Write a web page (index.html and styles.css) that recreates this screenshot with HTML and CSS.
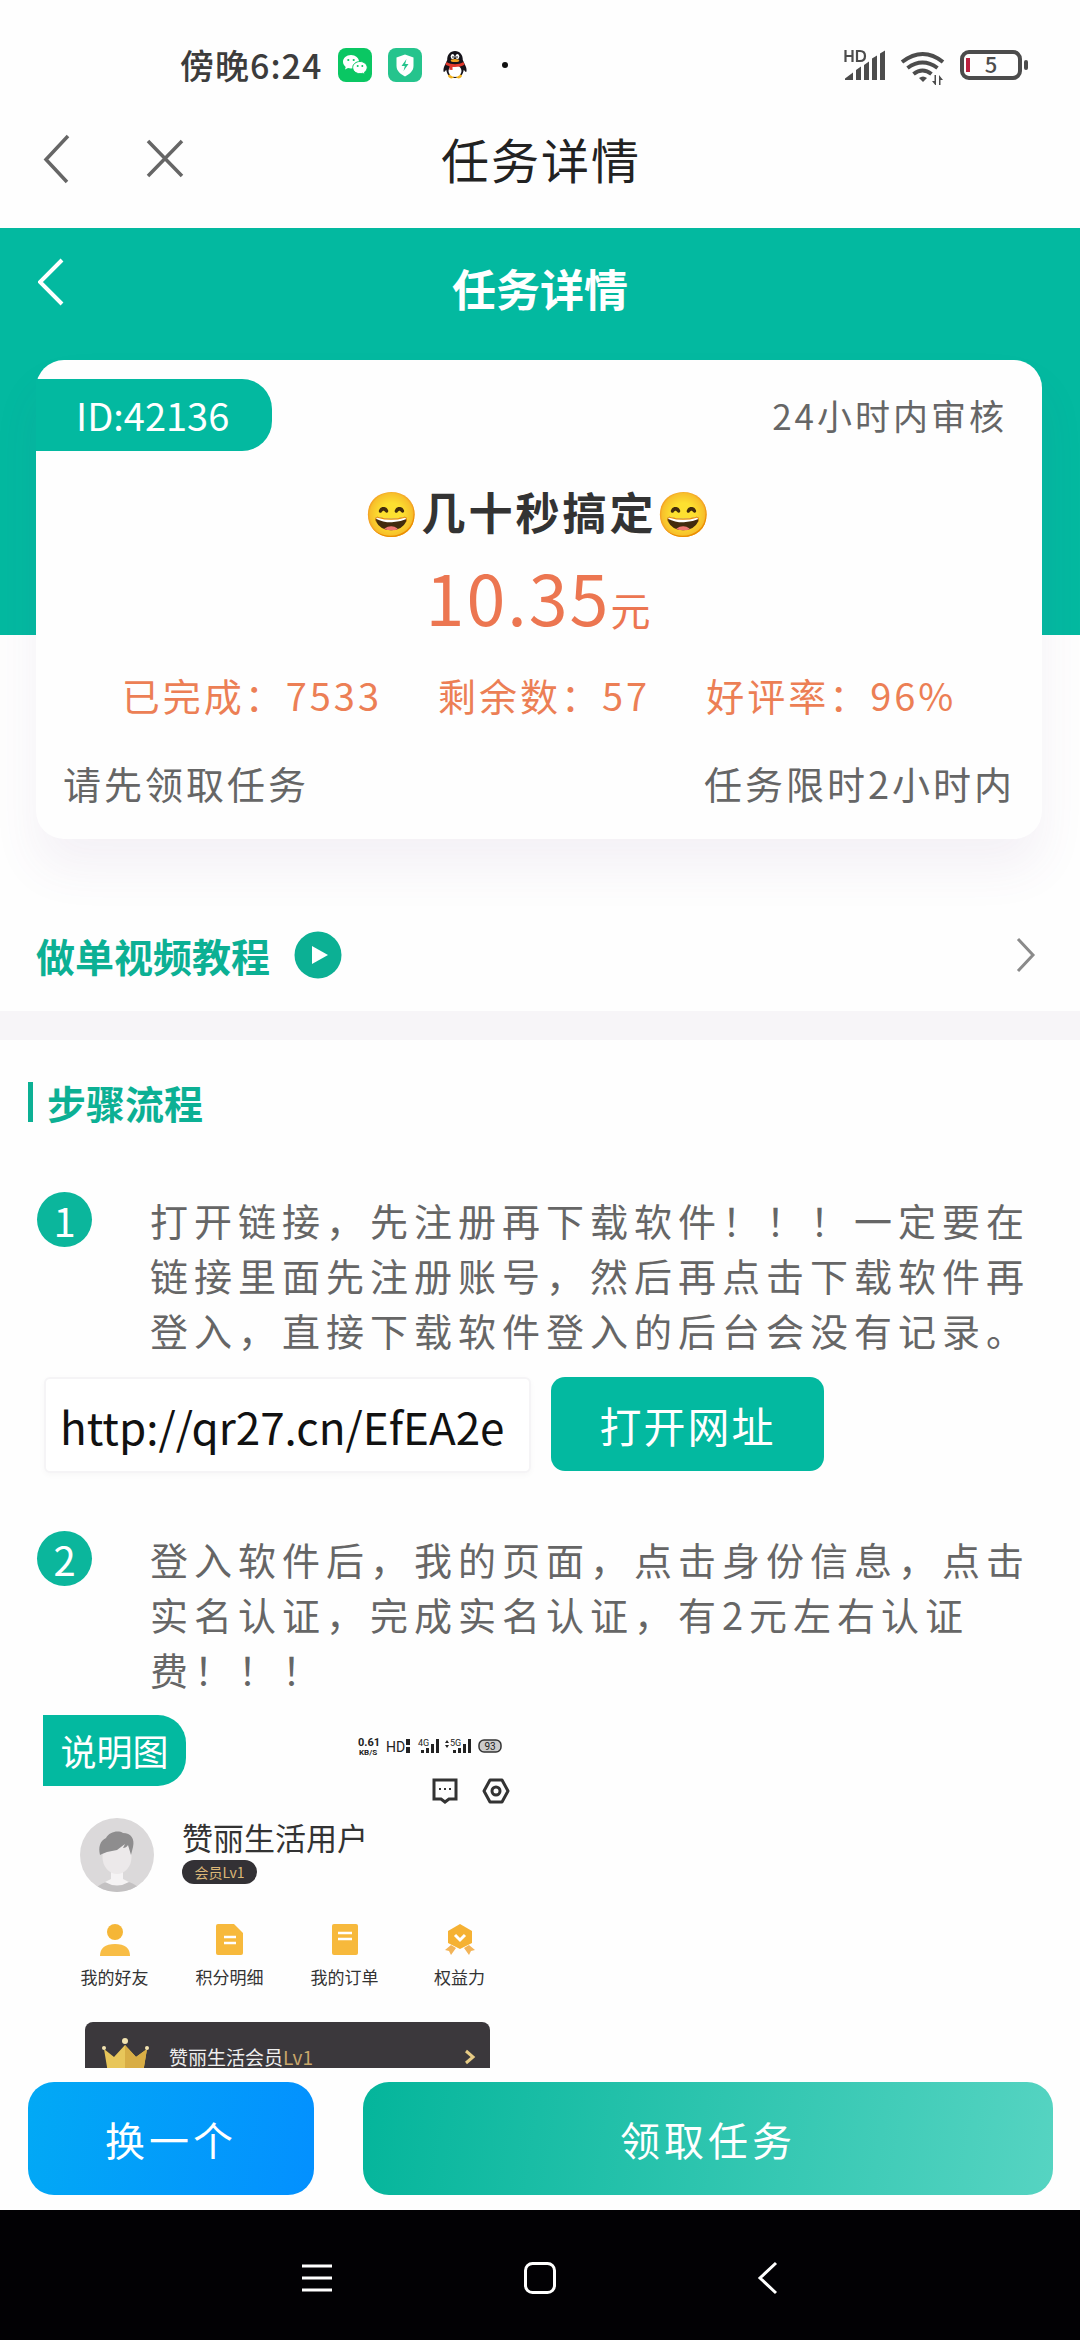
FILE: index.html
```html
<!DOCTYPE html>
<html lang="zh-CN">
<head>
<meta charset="utf-8">
<meta name="viewport" content="width=device-width, initial-scale=1">
<title>任务详情</title>
<link rel="stylesheet" href="styles.css">
</head>
<body>
<div class="status">
  <div class="status-left">
    <span class="clock">傍晚6:24</span>
    <svg class="app-icon" width="34" height="34" viewBox="0 0 34 34" aria-hidden="true">
      <rect width="34" height="34" rx="8" fill="#0ac763"/>
      <path d="M13 7c-4.600 0-8 3-8 6.800 0 2 1 3.900 2.700 5.100L7 21.500l3-1.500c1 .3 2 .4 3 .4 4.500 0 8-3 8-6.700S17.500 7 13 7z" fill="#fff"/>
      <path d="M22 13.500c-4 0-7.300 2.700-7.300 6.100s3.300 6.100 7.300 6.100c.9 0 1.800-.1 2.600-.4l2.400 1.300-.6-2.300c1.700-1.100 2.800-2.800 2.800-4.700 0-3.400-3.200-6.100-7.200-6.100z" fill="#fff" stroke="#0ac763"/>
      <g fill="#0ac763"><circle cx="10.300" cy="12" r="1.100"/><circle cx="15.700" cy="12" r="1.100"/><circle cx="19.700" cy="18" r="1"/><circle cx="24.300" cy="18" r="1"/></g>
    </svg>
    <svg class="app-icon" width="34" height="34" viewBox="0 0 34 34" aria-hidden="true">
      <rect width="34" height="34" rx="8" fill="#25c48d"/>
      <path d="M17 6.500l8.500 3v8.500c0 5-4 8-8.500 10.500C12.500 26 8.500 23 8.500 18V9.500z" fill="#fff"/>
      <path d="M18.500 11l-5 7h3.300L15.500 23l5-7h-3.300z" fill="#25c48d"/>
    </svg>
    <svg class="app-icon" width="34" height="34" viewBox="0 0 34 34" aria-hidden="true">
      <path d="M17 3c-5 0-8 4-7.800 9L6 19c-1 3-.5 5 0 5s1.500-1 2.200-2.200C9 27 12 30 17 30s8-3 8.800-8.200C26.500 23 27.500 24 28 24s1-2 0-5l-3.200-7C25 7 22 3 17 3z" fill="#16131a"/>
      <path d="M10 28c1-2 4-2 6 1-1 2-5 2-6-1zM24 28c-1-2-4-2-6 1 1 2 5 2 6-1z" fill="#f2b21c"/>
      <ellipse cx="17" cy="23" rx="6.500" ry="6" fill="#fff"/>
      <ellipse cx="14.600" cy="8.500" rx="1.900" ry="2.500" fill="#fff"/><ellipse cx="19.400" cy="8.500" rx="1.900" ry="2.500" fill="#fff"/>
      <circle cx="15" cy="9" r=".8"/><circle cx="19" cy="9" r=".8"/>
      <ellipse cx="17" cy="12.500" rx="4.300" ry="1.600" fill="#f0a020"/>
      <path d="M8.500 14c5 3 12 3 17 0l1 2.800c-3 1.800-8 2.600-12 2.100V22l-3.200-.3.200-3.400c-1.600-.3-3-.9-4-1.500z" fill="#e0382c"/>
    </svg>
    <svg class="app-icon" width="34" height="34" viewBox="0 0 34 34" aria-hidden="true"><circle cx="17" cy="17" r="3" fill="#111"/></svg>
  </div>
  <svg width="188" height="40" viewBox="0 0 188 40" aria-hidden="true">
    <g fill="none" stroke="#4c4c4c" stroke-width="2.200"><path d="M3.500 5v12M10.500 5v12M3.500 11h7M15 6v10h3q5 0 5-5t-5-5z"/></g>
    <g fill="#4c4c4c"><path d="M3 35v-1.500l8-6V35zM14 35V25l5-3.500V35zM22 35V20l5-3.500V35zM30 35V13.500l5-3V35zM38 35V8.500l5-3V35z"/></g>
    <g fill="none" stroke="#4c4c4c" stroke-width="4"><path d="M60 17q21-16 41 0"/><path d="M65.500 23q15-11 30 0"/><path d="M71.500 29q9-7 18 0"/></g>
    <path d="M77 33q4-3 8 0l-4 4zM94 30v11l-4-5h2.500v-6zM97 41V30l4 5h-2.500v6z" fill="#4c4c4c"/>
    <rect x="120" y="7" width="58" height="26" rx="7" fill="none" stroke="#4c4c4c" stroke-width="4"/>
    <rect x="124" y="13" width="4" height="14" fill="#bb2240"/>
    <rect x="182" y="15" width="4" height="10" rx="2" fill="#4c4c4c"/>
    <text class="battery" x="149" y="28" text-anchor="middle">5</text>
  </svg>
</div>

<header class="nav">
  <div class="nav-side">
    <button class="icon-btn" aria-label="返回"><svg width="30" height="52" viewBox="0 0 30 52"><path d="M26 4L4 27.500 25 50" fill="none" stroke="#666" stroke-width="3.500"/></svg></button>
    <button class="icon-btn" aria-label="关闭"><svg width="40" height="52" viewBox="0 0 40 52"><path d="M4 9l34 35M38 9L4 44" fill="none" stroke="#666" stroke-width="3.500"/></svg></button>
  </div>
  <h1 class="nav-title">任务详情</h1>
  <div class="nav-side"></div>
</header>

<main class="page">
  <section class="hero">
    <div class="hero-bar">
      <div class="hero-side"><button class="icon-btn" aria-label="返回"><svg width="30" height="50" viewBox="0 0 30 50"><path d="M24 3L2 25l22 22" fill="none" stroke="#fff" stroke-width="4"/></svg></button></div>
      <h2 class="hero-title">任务详情</h2>
      <div class="hero-side"></div>
    </div>
    <article class="card">
      <div class="card-top">
        <span class="task-id">ID:42136</span>
        <span class="review">24小时内审核</span>
      </div>
      <h3 class="task-name">😄几十秒搞定😄</h3>
      <p class="price">10.35<span class="unit">元</span></p>
      <div class="stats"><span>已完成：7533</span><span>剩余数：57</span><span>好评率：96%</span></div>
      <div class="card-foot"><span>请先领取任务</span><span>任务限时2小时内</span></div>
    </article>
  </section>

  <a class="video" href="#video">
    <span>做单视频教程</span>
    <svg width="48" height="48" viewBox="0 0 48 48" aria-hidden="true"><circle cx="24" cy="24" r="23.500" fill="#0cb094"/><path d="M18 15v18l16-9z" fill="#fff"/></svg>
    <svg class="more" width="24" height="40" viewBox="0 0 24 40" aria-hidden="true"><path d="M4 4l15 16L4 36" fill="none" stroke="#8a8a8a" stroke-width="3"/></svg>
  </a>

  <section class="steps">
    <h2 class="steps-title">步骤流程</h2>
    <div class="step">
      <span class="num">1</span>
      <p class="step-text">打开链接，先注册再下载软件！！！一定要在链接里面先注册账号，然后再点击下载软件再登入，直接下载软件登入的后台会没有记录。</p>
    </div>
    <div class="link-row">
      <input class="url" type="text" aria-label="网址" value="http://qr27.cn/EfEA2e" readonly>
      <button class="open">打开网址</button>
    </div>
    <div class="step">
      <span class="num">2</span>
      <p class="step-text">登入软件后，我的页面，点击身份信息，点击实名认证，完成实名认证，有2元左右认证费！！！</p>
    </div>

    <figure class="shot">
      <figcaption class="shot-tag">说明图</figcaption>
      <svg class="shot-status" width="148" height="24" viewBox="0 0 148 24" aria-hidden="true">
        <g class="tiny" fill="#222">
          <text x="0" y="12" font-size="11" font-weight="700">0.61</text>
          <text x="1" y="21" font-size="8" font-weight="700">KB/S</text>
          <text x="28" y="18" font-size="14">HD</text>
          <text x="60" y="12" font-size="9">4G</text>
          <text x="92" y="12" font-size="9">5G</text>
        </g>
        <path d="M48 5h4v6h-4zM48 13h4v6h-4zM63 16h3v3h-3zM68 14h3v5h-3zM73 10h3v9h-3zM78 5h3v14h-3zM87 9l2-3 2 3zM87 11l2 3 2-3zM95 16h3v3h-3zM100 14h3v5h-3zM105 10h3v9h-3zM110 5h3v14h-3z" fill="#222"/>
        <rect x="121" y="6" width="22" height="12" rx="5" fill="#ccc" stroke="#333" stroke-width="1.500"/>
        <text class="tiny" x="132" y="16" font-size="10" text-anchor="middle" fill="#222">93</text>
      </svg>
      <div class="shot-tools">
        <svg width="26" height="26" viewBox="0 0 26 26" aria-hidden="true"><path d="M2 2h22v19h-7l-4 3-4-3H2z" fill="none" stroke="#333" stroke-width="3"/><path d="M7 10h2v2H7zM12 10h2v2h-2zM17 10h2v2h-2z" fill="#333"/></svg>
        <svg width="28" height="26" viewBox="0 0 28 26" aria-hidden="true"><path d="M8 2h12l6 11-6 11H8L2 13z" fill="none" stroke="#333" stroke-width="3" stroke-linejoin="round"/><circle cx="14" cy="13" r="4" fill="none" stroke="#333" stroke-width="3"/></svg>
      </div>
      <div class="profile">
        <svg width="74" height="74" viewBox="0 0 74 74" aria-hidden="true">
          <clipPath id="round"><circle cx="37" cy="37" r="37"/></clipPath>
          <g clip-path="url(#round)"><rect width="74" height="74" fill="#dbd9da"/>
          <path d="M15 74c1-7 8-9 15-11h15c7 2 14 4 15 11z" fill="#c3c1c2"/>
          <path d="M31 50h12v11l6 3q-12 7-24 0l6-3z" fill="#f5f3f4"/>
          <ellipse cx="37" cy="39" rx="14.500" ry="17" fill="#ece9ea"/>
          <path d="M20 37c-2-8 0-14 6-17 3-6 12-8 17-5 8 0 12 6 10 14l-2 8-3-10c-1 2-3 3-5 3l2-4-8 6-10 2-5 2z" fill="#8e8d8e"/></g>
        </svg>
        <div class="profile-text"><strong class="user">赞丽生活用户</strong><span class="level">会员Lv1</span></div>
      </div>
      <div class="menu">
        <div class="menu-item"><svg width="32" height="34" viewBox="0 0 32 34" aria-hidden="true"><circle cx="16" cy="9" r="8" fill="#f5b637"/><path d="M1 33c0-8 5-12 15-12s15 4 15 12z" fill="#f8bd45"/></svg><span>我的好友</span></div>
        <div class="menu-item"><svg width="32" height="34" viewBox="0 0 32 34" aria-hidden="true"><path d="M4 1h16l9 9v20q0 2-2 2H4q-2 0-2-2V3q0-2 2-2z" fill="#f7b93c"/><path d="M10 14h12M10 20h12" stroke="#fff" stroke-width="2.500"/></svg><span>积分明细</span></div>
        <div class="menu-item"><svg width="32" height="34" viewBox="0 0 32 34" aria-hidden="true"><rect x="3" y="1" width="26" height="31" rx="2" fill="#f7b93c"/><path d="M9 10h14M9 16h14" stroke="#fff" stroke-width="2.500"/></svg><span>我的订单</span></div>
        <div class="menu-item"><svg width="32" height="34" viewBox="0 0 32 34" aria-hidden="true"><path d="M7 22l5 3-5 7-2-4-4-1zM25 22l-5 3 5 7 2-4 4-1z" fill="#f3b458"/><path d="M16 1l12 7v12l-12 6-12-6V8z" fill="#f5b133"/><path d="M11 12l5 5 5-5" fill="none" stroke="#fff" stroke-width="3"/></svg><span>权益力</span></div>
      </div>
      <div class="vip">
        <svg width="50" height="36" viewBox="0 0 50 36" aria-hidden="true"><path d="M3 12l10 8L24 8l11 12 11-8-4 24H7z" fill="#e8c65a"/><path d="M24 8l11 12 11-8-4 24H24z" fill="#d8ad45"/><g fill="#f2e3b0"><circle cx="24" cy="4" r="3"/><circle cx="3" cy="11" r="2"/><circle cx="46" cy="11" r="2"/></g></svg>
        <span class="vip-name">赞丽生活会员<span class="gold">Lv1</span></span>
        <svg width="12" height="16" viewBox="0 0 12 16" aria-hidden="true"><path d="M2 2l7 6-7 6" fill="none" stroke="#e6cb85" stroke-width="3"/></svg>
      </div>
    </figure>
  </section>
</main>

<footer class="actions">
  <button class="action swap">换一个</button>
  <button class="action take">领取任务</button>
</footer>

<nav class="system">
  <button class="icon-btn" aria-label="最近任务"><svg width="34" height="34" viewBox="0 0 34 34"><path d="M3 5h30M3 17h30M3 29h30" stroke="#fff" stroke-width="3"/></svg></button>
  <button class="icon-btn" aria-label="主屏幕"><svg width="34" height="34" viewBox="0 0 34 34"><rect x="2.500" y="2.500" width="29" height="29" rx="7" fill="none" stroke="#fff" stroke-width="3"/></svg></button>
  <button class="icon-btn" aria-label="返回"><svg width="34" height="34" viewBox="0 0 34 34"><path d="M29 2L13 17l16 15" fill="none" stroke="#fff" stroke-width="3"/></svg></button>
</nav>
</body>
</html>
```
FILE: styles.css
```css
* { box-sizing: border-box; }

body {
  margin: 0;
  height: 100vh;
  display: flex;
  flex-direction: column;
  overflow: hidden;
  background: #fefefe;
  color: #666;
  font-family: "Noto Sans CJK SC", sans-serif;
  text-spacing-trim: space-all;
}

h1, h2, h3, p, figure { margin: 0; }
svg { display: block; flex: none; }
button, input { font: inherit; border: 0; }

.icon-btn {
  padding: 0;
  background: none;
  line-height: 0;
}

/* system status bar */
.status {
  display: flex;
  justify-content: space-between;
  align-items: center;
  height: 130px;
  padding: 0 50px 0 180px;
}
.status-left {
  display: flex;
  align-items: center;
  gap: 16px;
}
.clock {
  font-size: 34px;
  font-weight: 500;
  line-height: 40px;
  letter-spacing: 1px;
  color: #3c3c3c;
}
.battery { font-size: 22px; font-weight: 500; fill: #4c4c4c; }

/* browser title bar */
.nav {
  display: flex;
  align-items: center;
  height: 98px;
  padding: 0 40px 42px 42px;
}
.nav-side { flex: 1; display: flex; gap: 72px; }
.nav-title {
  font-size: 48px;
  font-weight: 400;
  line-height: 56px;
  letter-spacing: 2px;
  color: #222;
}

.page { flex: 1; min-height: 0; overflow: hidden; }

.hero {
  padding: 0 38px 0 36px;
  background: linear-gradient(#03b9a0 407px, transparent 407px);
}
.hero-bar {
  display: flex;
  align-items: center;
  height: 132px;
  padding: 0 0 12px 2px;
}
.hero-side { flex: 1; padding-bottom: 8px; }
.hero-title {
  font-size: 44px;
  font-weight: 700;
  line-height: 60px;
  color: #fff;
}

.card {
  padding: 19px 0 28px;
  border-radius: 28px;
  background: #fefefe;
  box-shadow: 0 30px 48px rgba(110, 70, 140, .07);
}
.card-top {
  display: flex;
  justify-content: space-between;
  align-items: center;
  padding-right: 35px;
}
.task-id {
  width: 236px;
  padding-left: 40px;
  border-radius: 0 30px 30px 0;
  background: #03b9a0;
  color: #fff;
  font-size: 38px;
  line-height: 72px;
}
.review { font-size: 35px; letter-spacing: 3px; line-height: 56px; }
.task-name {
  margin-top: 30px;
  text-align: center;
  font-size: 44px;
  font-weight: 700;
  line-height: 60px;
  letter-spacing: 3px;
  color: #333;
}
.price {
  margin-top: 15px;
  text-align: center;
  font-size: 70px;
  line-height: 80px;
  letter-spacing: 2px;
  color: #ec7651;
}
.unit { font-size: 40px; line-height: 40px; }
.stats {
  display: flex;
  justify-content: center;
  gap: 56px;
  margin-top: 31px;
  font-size: 38px;
  line-height: 56px;
  letter-spacing: 3px;
  color: #ec7f55;
}
.card-foot {
  display: flex;
  justify-content: space-between;
  margin-top: 32px;
  padding: 0 27px;
  font-size: 38px;
  line-height: 56px;
  letter-spacing: 3px;
}

.video {
  display: flex;
  align-items: center;
  gap: 24px;
  margin-top: 60px;
  padding: 0 42px 0 36px;
  height: 112px;
  color: #0cb094;
  font-size: 39px;
  font-weight: 700;
  text-decoration: none;
}
.more { margin-left: auto; }

.steps { border-top: 29px solid #f7f5f8; padding: 42px 28px 0; }
.steps-title {
  padding-left: 14px;
  border-left: 5px solid #0cb094;
  font-size: 39px;
  font-weight: 700;
  line-height: 40px;
  color: #0cb094;
}
.step {
  display: flex;
  gap: 58px;
  margin-top: 58px;
  padding: 0 10px 0 9px;
}
.steps-title + .step { margin-top: 70px; }
.num {
  flex: none;
  width: 55px;
  height: 55px;
  border-radius: 50%;
  background: #0bb69c;
  color: #fff;
  font-size: 40px;
  line-height: 57px;
  text-align: center;
}
.step-text {
  font-size: 38px;
  line-height: 55px;
  letter-spacing: 6px;
}
.link-row {
  display: flex;
  gap: 20px;
  margin-top: 20px;
  padding-left: 16px;
}
.url {
  width: 487px;
  height: 96px;
  padding: 2px 14px 0;
  border: 2px solid #f5f4f6;
  border-radius: 6px;
  background: #fff;
  box-shadow: 0 2px 6px rgba(0, 0, 0, .03);
  font-size: 44px;
  color: #111;
}
.open {
  width: 273px;
  height: 94px;
  border-radius: 14px;
  background: #03b9a0;
  color: #fff;
  font-size: 42px;
  letter-spacing: 2px;
}

/* sample picture attached to step 2 */
.shot {
  position: relative;
  width: 477px;
  margin: 19px 0 0 15px;
  padding: 19px 0 0;
  color: #333;
}
.shot-tag {
  position: absolute;
  left: 0;
  top: 0;
  width: 143px;
  border-radius: 0 28px 28px 0;
  background: #03b9a0;
  color: #fff;
  font-size: 36px;
  line-height: 71px;
  text-align: center;
}
.shot-status { margin-left: 315px; }
.tiny { font-family: Roboto, sans-serif; }
.shot-tools {
  display: flex;
  justify-content: flex-end;
  gap: 24px;
  margin-top: 20px;
  padding-right: 10px;
}
.profile {
  display: flex;
  gap: 28px;
  margin-top: 14px;
  padding-left: 37px;
}
.profile-text {
  display: flex;
  flex-direction: column;
  align-items: flex-start;
  gap: 4px;
}
.user { font-size: 31px; font-weight: 400; line-height: 38px; }
.level {
  width: 75px;
  border-radius: 12px;
  background: #333135;
  color: #dcb878;
  font-size: 14px;
  line-height: 24px;
  text-align: center;
}
.menu {
  display: grid;
  grid-template-columns: repeat(4, 115px);
  margin: 31px 0 0 14px;
}
.menu-item {
  display: flex;
  flex-direction: column;
  align-items: center;
  gap: 8px;
  font-size: 17px;
  line-height: 24px;
}
.vip {
  display: flex;
  align-items: flex-start;
  gap: 18px;
  width: 405px;
  height: 66px;
  margin: 33px 0 0 42px;
  padding: 15px 14px 0 16px;
  border-radius: 8px 8px 0 0;
  background: #3b383c;
  color: #eee;
  font-size: 19px;
}
.vip-name { flex: 1; margin-top: 11px; line-height: 18px; }
.vip-name + svg { margin-top: 12px; }
.gold { color: #c9a66a; }

.actions {
  display: flex;
  gap: 49px;
  padding: 14px 27px 15px 28px;
  background: #fefefe;
}
.action {
  height: 113px;
  padding: 0;
  border-radius: 26px;
  color: #fff;
  font-size: 40px;
  letter-spacing: 4px;
}
.swap { flex: 286; background: linear-gradient(100deg, #02a9f5, #0390ff); }
.take { flex: 690; background: linear-gradient(100deg, #04b59b, #56d4c2); }

.system {
  display: flex;
  justify-content: center;
  gap: 190px;
  height: 130px;
  padding-top: 6px;
  background: #020104;
}
```
